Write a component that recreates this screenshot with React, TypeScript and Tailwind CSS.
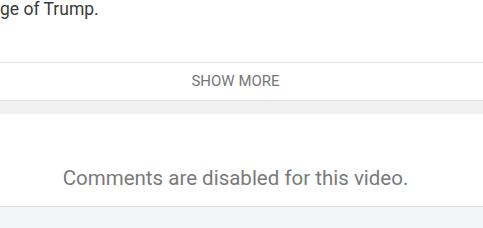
export default function App() {
  return (
    <div className="w-full h-[228px] overflow-hidden bg-white font-['Roboto','Liberation_Sans',sans-serif]">
      <div className="h-[62px]">
        <p className="text-[17.5px] leading-[18px] text-[#3a3a3a]">ge of Trump.</p>
      </div>
      <div className="h-[39px] border-y border-[#e3e3e3] flex items-center justify-center pr-[12px]">
        <span className="text-[15px] text-[#767676]">SHOW MORE</span>
      </div>
      <div className="h-[13px] bg-[#f1f1f1]" />
      <div className="h-[93px] border-b border-[#dedede] pt-[52px] flex justify-center pr-[12px]">
        <p className="text-[20.5px] leading-[24px] text-[#7a7a7a]">Comments are disabled for this video.</p>
      </div>
      <div className="h-[30px] bg-[#f3f6f9]" />
    </div>
  )
}
